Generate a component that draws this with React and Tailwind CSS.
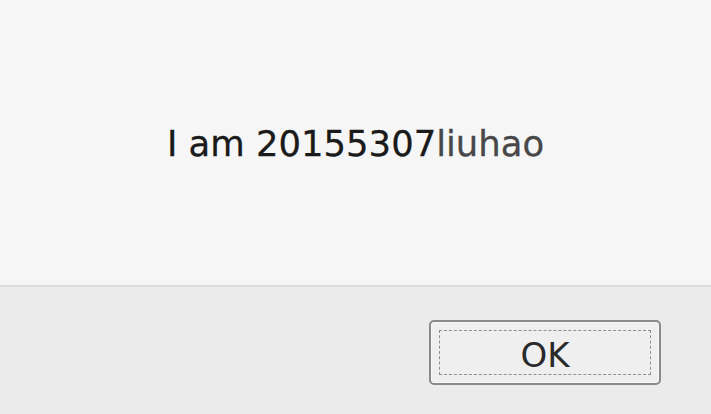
export default function App() {
  return (
    <div className="w-[711px] h-[414px] flex flex-col bg-[#ebebeb] font-['DejaVu_Sans',sans-serif] overflow-hidden">
      <div className="h-[287px] bg-[#f6f6f6] flex justify-center pt-[126px] border-b-2 border-[#dcdcdc]">
        <p className="text-[35.4px] leading-[35px] text-[#1a1a1a] whitespace-nowrap [-webkit-text-stroke:0.3px_#1a1a1a]">
          I am 20155307
          <span className="text-[#484848] [-webkit-text-stroke:0.3px_#484848]">liuhao</span>
        </p>
      </div>
      <div className="flex justify-end pt-[33px] pr-[50px]">
        <button className="w-[232px] h-[65px] rounded-[5px] border-2 border-[#8a8a8a] bg-[#efefef] p-[8px] shadow-[inset_0_0_0_1px_#f8f8f8]">
          <span className="flex items-center justify-center w-full h-full pt-[5px] border border-dashed border-[#8e8e8e] text-[34px] leading-none text-[#2a2a2a]">
            OK
          </span>
        </button>
      </div>
    </div>
  );
}
